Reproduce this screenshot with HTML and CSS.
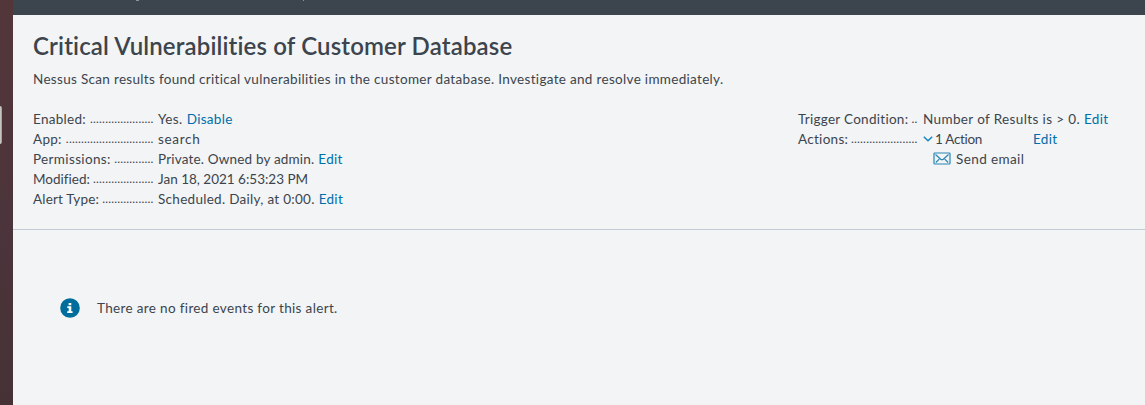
FILE: index.html
```
<!DOCTYPE html>
<html lang="en">
<head>
<meta charset="utf-8">
<title>Critical Vulnerabilities of Customer Database</title>
<link rel="stylesheet" href="styles.css">
</head>
<body>
<div class="window">
  <aside class="desktop-edge"><span class="dock-marker"></span></aside>
  <div class="app">
    <nav class="topbar"><i class="tick tick-first"></i><i class="tick tick-second"></i></nav>
    <header class="alert-header">
      <h1 class="title">Critical Vulnerabilities of Customer Database</h1>
      <p class="description">Nessus Scan results found critical vulnerabilities in the customer database. Investigate and resolve immediately.</p>
      <div class="details">
        <dl class="list">
          <div class="row"><dt><span>Enabled:</span><span class="dots">.....................</span></dt><dd><span class="v-yes">Yes.</span><a>Disable</a></dd></div>
          <div class="row"><dt><span>App:</span><span class="dots">.............................</span></dt><dd><span class="v-search">search</span></dd></div>
          <div class="row"><dt><span class="l-permissions">Permissions:</span><span class="dots">.............</span></dt><dd><span class="v-owner">Private. Owned by admin.</span><a>Edit</a></dd></div>
          <div class="row"><dt><span class="l-modified">Modified:</span><span class="dots">....................</span></dt><dd><span class="v-date">Jan 18, 2021 6:53:23 PM</span></dd></div>
          <div class="row"><dt><span class="l-type">Alert Type:</span><span class="dots">.................</span></dt><dd><span>Scheduled. Daily, at 0:00.</span><a>Edit</a></dd></div>
        </dl>
        <dl class="list list-right">
          <div class="row"><dt><span class="l-trigger">Trigger Condition:</span><span class="dots">..</span></dt><dd><span class="v-results">Number of Results is &gt; 0.</span><a>Edit</a></dd></div>
          <div class="row"><dt><span>Actions:</span><span class="dots">......................</span></dt><dd>
            <svg class="chevron" viewBox="0 0 10 6"><path d="M.8.8L5 4.8 9.2.8"/></svg><span class="v-action">1 Action</span><a>Edit</a></dd></div>
          <div class="row email">
            <svg class="envelope" viewBox="0 0 18 13"><rect x="1" y="1" width="16" height="11" rx=".7"/><path d="M2.5 2.5l5.2 4.7q1.3 1 2.6 0l5.2-4.7M2.8 10.5l3.5-3.4M15.2 10.5l-3.5-3.4"/></svg><span class="v-send">Send email</span></div>
        </dl>
      </div>
    </header>
    <main class="message">
      <svg class="info" viewBox="0 0 20 20"><circle cx="10" cy="10" r="9.8"/><path d="M8.6 5h2.7v2.2H8.6zM7.3 8.3h4v5h1.3V15H7.2v-1.7h1.5V10H7.3z"/></svg>
      <span class="v-message">There are no fired events for this alert.</span>
    </main>
  </div>
</div>
</body>
</html>
```
FILE: styles.css
```
* { box-sizing: border-box; }
body { margin: 0; background: #f2f4f5; color: #3c444d; font: 13.5px/20px Lato, "Open Sans", sans-serif; font-variant-ligatures: none; letter-spacing: .29px; }
.window { display: flex; width: 1145px; height: 405px; overflow: hidden; }
.desktop-edge { width: 13px; flex: none; padding-top: 106px; background: linear-gradient(#53363a, #4b343b 55%, #463236); }
.dock-marker { display: block; width: 2px; height: 38px; background: linear-gradient(90deg, #d5d5cf, #99938f); border-radius: 0 2px 2px 0; }
.app { flex: 1; min-width: 0; }
.topbar { height: 15px; background: #3c444d; display: flex; }
.tick { width: 3px; height: 1px; background: #8b9299; }
.tick-first { margin-left: 123px; }
.tick-second { margin-left: 164px; width: 1px; }
.alert-header { height: 215px; padding: 16px 20px 0; border-bottom: 1px solid #c3cbd4; }
.title { margin: 0; font-size: 24px; line-height: 30px; font-weight: 600; letter-spacing: .15px; white-space: nowrap; }
.description { margin: 8px 0 20px; letter-spacing: .315px; white-space: nowrap; }
.details { display: flex; }
.list { width: 765px; flex: none; margin: 0; }
.list-right { width: 327px; }
.row { display: flex; height: 20px; white-space: nowrap; }
dt { width: 120.5px; margin-right: 4.5px; flex: none; display: flex; justify-content: space-between; }
.list-right dt { width: 119.5px; margin-right: 5.5px; }
dd { margin: 0; display: flex; }
dd a { color: #006eaa; margin-left: 4px; }
.dots { font-size: 12px; letter-spacing: .19px; }
.l-permissions { letter-spacing: .36px; }
.l-modified { letter-spacing: 0; }
.l-type { letter-spacing: .18px; }
.l-trigger { letter-spacing: .28px; }
.v-yes { letter-spacing: .4px; }
.v-search { letter-spacing: .7px; }
.v-owner { letter-spacing: .18px; }
.v-date { letter-spacing: 0; }
.v-results { letter-spacing: .37px; }
.v-send { letter-spacing: .4px; }
.v-message { letter-spacing: .34px; }
.chevron { width: 10px; height: 6px; margin: 7px 2px 0 0; fill: none; stroke: #1686bd; stroke-width: 1.5; }
.v-action { width: 94px; letter-spacing: -.3px; }
.envelope { width: 18px; height: 13px; margin: 3px 5px 0 0; fill: none; stroke: #2785b5; stroke-width: 1.2; }
.email { padding-left: 135px; }
.message { display: flex; padding: 68px 0 0 47px; align-items: center; }
.info { width: 20px; height: 20px; margin-right: 17px; }
.info circle { fill: #006d9c; }
.info path { fill: #fff; }
```
